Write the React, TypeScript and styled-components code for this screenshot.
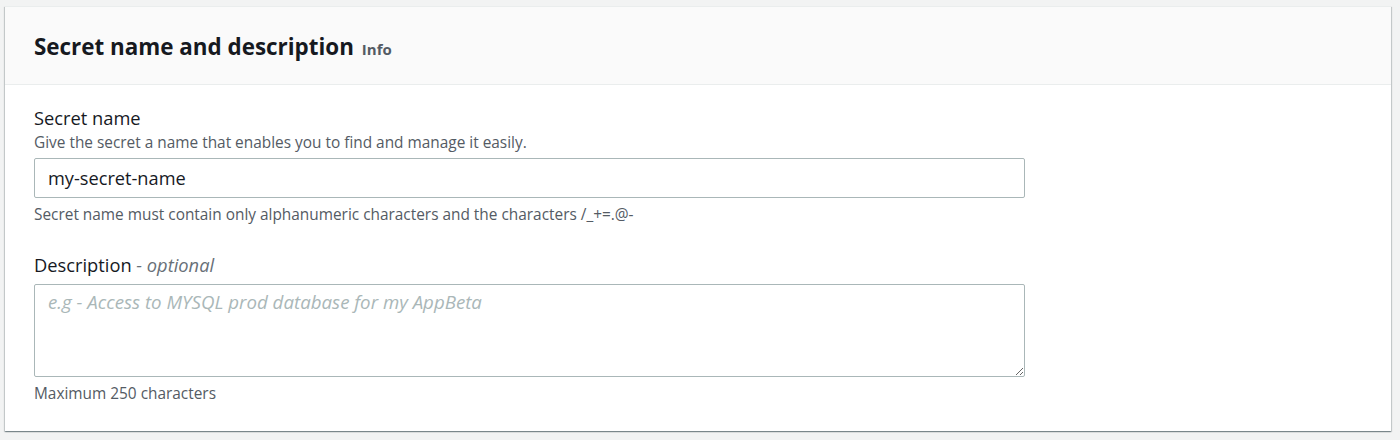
import React from 'react';
import styled, { createGlobalStyle } from 'styled-components';

const GlobalStyle = createGlobalStyle`
  html, body {
    margin: 0;
    padding: 0;
    background: #f2f3f3;
    font-family: "Open Sans", "Noto Sans", Arial, sans-serif;
    color: #16191f;
  }
`;

const Page = styled.div`
  padding: 6px 9px 9px 5px;
  height: 440px;
  box-sizing: border-box;
`;

const Card = styled.section`
  background: #fff;
  border-top: 1px solid #eaeded;
  box-shadow: 0 1px 1px 0 rgba(0, 28, 36, 0.3), 1px 1px 1px 0 rgba(0, 28, 36, 0.15),
    -1px 1px 1px 0 rgba(0, 28, 36, 0.15);
  height: 424px;
  display: flex;
  flex-direction: column;
`;

const Header = styled.header`
  background: #fafafa;
  border-bottom: 1px solid #eaeded;
  height: 78px;
  box-sizing: border-box;
  padding: 2px 29px 0;
  display: flex;
  align-items: center;
`;

const Title = styled.h2`
  margin: 0;
  font-size: 22.4px;
  font-weight: 700;
  color: #16191f;
  display: flex;
  align-items: baseline;
  gap: 8px;
`;

const InfoLink = styled.span`
  font-size: 15px;
  font-weight: 700;
  color: #545b64;
`;

const Body = styled.div`
  padding: 20px 29px 0;
  display: flex;
  flex-direction: column;
  gap: 27px;
`;

const Field = styled.div`
  display: flex;
  flex-direction: column;
  width: 991px;
`;

const Label = styled.label`
  font-size: 18.3px;
  line-height: 26px;
  color: #16191f;
`;

const Optional = styled.i`
  color: #687078;
`;

const Description = styled.div`
  margin-top: 2px;
  font-size: 15.4px;
  line-height: 20px;
  color: #545b64;
`;

const Constraint = styled.div`
  font-size: 15.4px;
  line-height: 20px;
  color: #545b64;
  margin-top: 7px;
`;

const TextInput = styled.input`
  margin-top: 5px;
  height: 40px;
  box-sizing: border-box;
  border: 1px solid #aab7b8;
  border-radius: 2px;
  padding: 0 13px;
  font-family: inherit;
  font-size: 18.2px;
  color: #16191f;
  outline: none;
`;

const TextArea = styled.textarea`
  margin-top: 6px;
  height: 93px;
  box-sizing: border-box;
  border: 1px solid #aab7b8;
  border-radius: 2px;
  padding: 4px 13px;
  font-family: inherit;
  font-size: 18.7px;
  line-height: 26px;
  color: #16191f;
  outline: none;
  resize: vertical;
  &::placeholder {
    color: #aab7b8;
    font-style: italic;
  }
`;

export default function App() {
  return (
    <>
      <GlobalStyle />
      <Page>
        <Card>
          <Header>
            <Title>
              Secret name and description
              <InfoLink>Info</InfoLink>
            </Title>
          </Header>
          <Body>
            <Field>
              <Label>Secret name</Label>
              <Description>Give the secret a name that enables you to find and manage it easily.</Description>
              <TextInput defaultValue="my-secret-name" />
              <Constraint>Secret name must contain only alphanumeric characters and the characters /_+=.@-</Constraint>
            </Field>
            <Field>
              <Label>
                Description <Optional>- optional</Optional>
              </Label>
              <TextArea placeholder="e.g - Access to MYSQL prod database for my AppBeta" />
              <Constraint>Maximum 250 characters</Constraint>
            </Field>
          </Body>
        </Card>
      </Page>
    </>
  );
}
